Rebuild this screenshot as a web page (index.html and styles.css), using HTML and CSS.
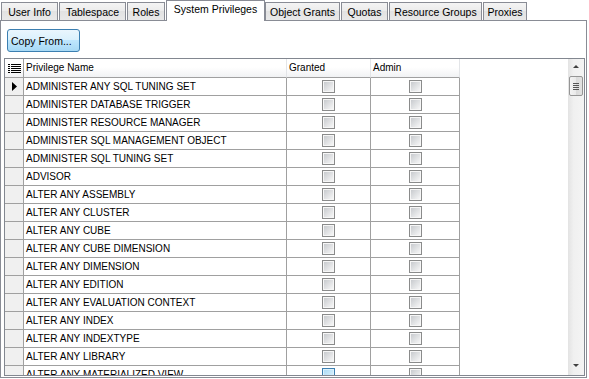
FILE: index.html
```html
<!DOCTYPE html>
<html lang="en">
<head>
  <meta charset="UTF-8">
  <title>System Privileges</title>
  <link rel="stylesheet" href="styles.css">
</head>
<body>
  <div class="tabs">
    <div class="tab t-user">User Info</div>
    <div class="tab t-space">Tablespace</div>
    <div class="tab t-roles">Roles</div>
    <div class="tab t-sys active">System Privileges</div>
    <div class="tab t-obj">Object Grants</div>
    <div class="tab t-quota">Quotas</div>
    <div class="tab t-res">Resource Groups</div>
    <div class="tab t-proxy">Proxies</div>
  </div>
  <div class="panel">
    <button class="btn">Copy From...</button>
    <div class="grid">
      <div class="table">
        <div class="row head">
          <div class="ind">
            <svg width="13" height="9" viewBox="0 0 13 9">
              <g fill="#000">
                <rect x="0" y="0" width="2" height="1"/><rect x="3" y="0" width="10" height="1"/>
                <rect x="0" y="2" width="2" height="1"/><rect x="3" y="2" width="10" height="1"/>
                <rect x="0" y="4" width="2" height="1"/><rect x="3" y="4" width="10" height="1"/>
                <rect x="0" y="6" width="2" height="1"/><rect x="3" y="6" width="10" height="1"/>
                <rect x="0" y="8" width="2" height="1"/><rect x="3" y="8" width="10" height="1"/>
              </g>
            </svg>
          </div>
          <div class="cell">Privilege Name</div>
          <div class="cell">Granted</div>
          <div class="cell">Admin</div>
        </div>
        <div class="row">
          <div class="ind current"><svg width="5" height="9" viewBox="0 0 5 9"><polygon points="0,0 5,4.5 0,9" fill="#000"/></svg></div>
          <div class="cell">ADMINISTER ANY SQL TUNING SET</div>
          <div class="chk"><span class="box"></span></div>
          <div class="chk"><span class="box"></span></div>
        </div>
        <div class="row"><div class="ind"></div><div class="cell">ADMINISTER DATABASE TRIGGER</div><div class="chk"><span class="box"></span></div><div class="chk"><span class="box"></span></div></div>
        <div class="row"><div class="ind"></div><div class="cell">ADMINISTER RESOURCE MANAGER</div><div class="chk"><span class="box"></span></div><div class="chk"><span class="box"></span></div></div>
        <div class="row"><div class="ind"></div><div class="cell">ADMINISTER SQL MANAGEMENT OBJECT</div><div class="chk"><span class="box"></span></div><div class="chk"><span class="box"></span></div></div>
        <div class="row"><div class="ind"></div><div class="cell">ADMINISTER SQL TUNING SET</div><div class="chk"><span class="box"></span></div><div class="chk"><span class="box"></span></div></div>
        <div class="row"><div class="ind"></div><div class="cell">ADVISOR</div><div class="chk"><span class="box"></span></div><div class="chk"><span class="box"></span></div></div>
        <div class="row"><div class="ind"></div><div class="cell">ALTER ANY ASSEMBLY</div><div class="chk"><span class="box"></span></div><div class="chk"><span class="box"></span></div></div>
        <div class="row"><div class="ind"></div><div class="cell">ALTER ANY CLUSTER</div><div class="chk"><span class="box"></span></div><div class="chk"><span class="box"></span></div></div>
        <div class="row"><div class="ind"></div><div class="cell">ALTER ANY CUBE</div><div class="chk"><span class="box"></span></div><div class="chk"><span class="box"></span></div></div>
        <div class="row"><div class="ind"></div><div class="cell">ALTER ANY CUBE DIMENSION</div><div class="chk"><span class="box"></span></div><div class="chk"><span class="box"></span></div></div>
        <div class="row"><div class="ind"></div><div class="cell">ALTER ANY DIMENSION</div><div class="chk"><span class="box"></span></div><div class="chk"><span class="box"></span></div></div>
        <div class="row"><div class="ind"></div><div class="cell">ALTER ANY EDITION</div><div class="chk"><span class="box"></span></div><div class="chk"><span class="box"></span></div></div>
        <div class="row"><div class="ind"></div><div class="cell">ALTER ANY EVALUATION CONTEXT</div><div class="chk"><span class="box"></span></div><div class="chk"><span class="box"></span></div></div>
        <div class="row"><div class="ind"></div><div class="cell">ALTER ANY INDEX</div><div class="chk"><span class="box"></span></div><div class="chk"><span class="box"></span></div></div>
        <div class="row"><div class="ind"></div><div class="cell">ALTER ANY INDEXTYPE</div><div class="chk"><span class="box"></span></div><div class="chk"><span class="box"></span></div></div>
        <div class="row"><div class="ind"></div><div class="cell">ALTER ANY LIBRARY</div><div class="chk"><span class="box"></span></div><div class="chk"><span class="box"></span></div></div>
        <div class="row"><div class="ind"></div><div class="cell">ALTER ANY MATERIALIZED VIEW</div><div class="chk"><span class="box hot"></span></div><div class="chk"><span class="box"></span></div></div>
      </div>
      <div class="scroll">
        <div class="arrow up"></div>
        <div class="thumb"><span class="grip"></span></div>
        <div class="arrow down"></div>
      </div>
    </div>
  </div>
</body>
</html>
```

FILE: styles.css
```css
body { margin: 0; font-family: "Liberation Sans", Arial, sans-serif; font-size: 10px; color: #000; background: #fff; }

.tabs { display: flex; align-items: flex-end; height: 20px; padding-left: 1px; position: relative; z-index: 1; }
.tab { height: 18px; line-height: 18px; text-align: center; box-sizing: border-box; border: 1px solid #898c95; border-bottom: 0; margin-right: 1px; background: linear-gradient(#f4f4f4, #ebebeb 50%, #e2e2e2 50%, #e9e9e9); white-space: nowrap; font-size: 10.5px; }
.tab.active { height: 21px; line-height: 17px; background: #fff; margin: 0 0 -1px 0; }
.t-user { width: 57px; }
.t-space { width: 67px; }
.t-roles { width: 38px; }
.t-sys { width: 99px; }
.t-obj { width: 75px; }
.t-quota { width: 47px; }
.t-res { width: 93px; }
.t-proxy { width: 44px; }

.panel { width: 587px; height: 358px; box-sizing: border-box; border: 1px solid #898c95; padding: 8px 0 0 3px; }

.btn { display: block; width: 73px; height: 23px; margin-left: 3px; padding: 0 0 0 3px; border: 1px solid #3c7fb1; border-radius: 3px; background: linear-gradient(#eaf6fd, #d9f0fc 50%, #bee6fd 50%, #a7d9f5); font: inherit; font-size: 10.5px; color: #000; text-align: left; }

.grid { display: flex; margin-top: 6px; width: 581px; height: 318px; box-sizing: border-box; border: 1px solid #828790; overflow: hidden; }
.table { width: 455px; flex: none; }
.row { display: grid; grid-template-columns: 19px 263px 84px 89px; height: 18px; }
.row > div { box-sizing: border-box; border-right: 1px solid #a0a0a0; border-bottom: 1px solid #a0a0a0; }
.row.head { height: 19px; }
.head > div { background: linear-gradient(#fff, #fff 45%, #f1f2f4); border-right-color: #e3e5e8; line-height: 18px; }
.head .ind { display: flex; align-items: center; justify-content: center; border-right-color: #a0a0a0; }

.cell { padding-left: 2px; line-height: 17px; white-space: nowrap; overflow: hidden; }
.ind { background: #f0f0f0; }
.ind.current { display: flex; align-items: center; padding-left: 7px; }
.chk { display: flex; align-items: center; justify-content: center; }

.box { width: 13px; height: 13px; box-sizing: border-box; border: 1px solid #8a8b8b; background: linear-gradient(135deg, #c3c6ca, #fbfbfb); box-shadow: inset 0 0 0 1px #f6f6f6; }
.box.hot { border-color: #3c7fb1; background: linear-gradient(135deg, #a9dbf6, #e4f5fd); box-shadow: inset 0 0 0 1px #def2fc; }

.scroll { width: 16px; margin-left: auto; display: flex; flex-direction: column; align-items: center; background: linear-gradient(90deg, #e3e3e3, #f0f0f0 35%, #f4f4f4); }
.arrow { width: 0; height: 0; border-left: 3.5px solid transparent; border-right: 3.5px solid transparent; }
.arrow.up { margin-top: 6px; border-bottom: 3px solid #404040; }
.arrow.down { margin-top: auto; margin-bottom: 8px; border-top: 3px solid #404040; }
.thumb { display: flex; align-items: center; justify-content: center; width: 14px; height: 20px; margin-top: 8px; box-sizing: border-box; border: 1px solid #959595; border-radius: 2px; background: linear-gradient(90deg, #f3f3f3, #e9e9e9 50%, #dadada 50%, #e2e2e2); }
.grip { width: 6px; height: 7px; background: repeating-linear-gradient(#555 0 1px, transparent 1px 2px); }
```
